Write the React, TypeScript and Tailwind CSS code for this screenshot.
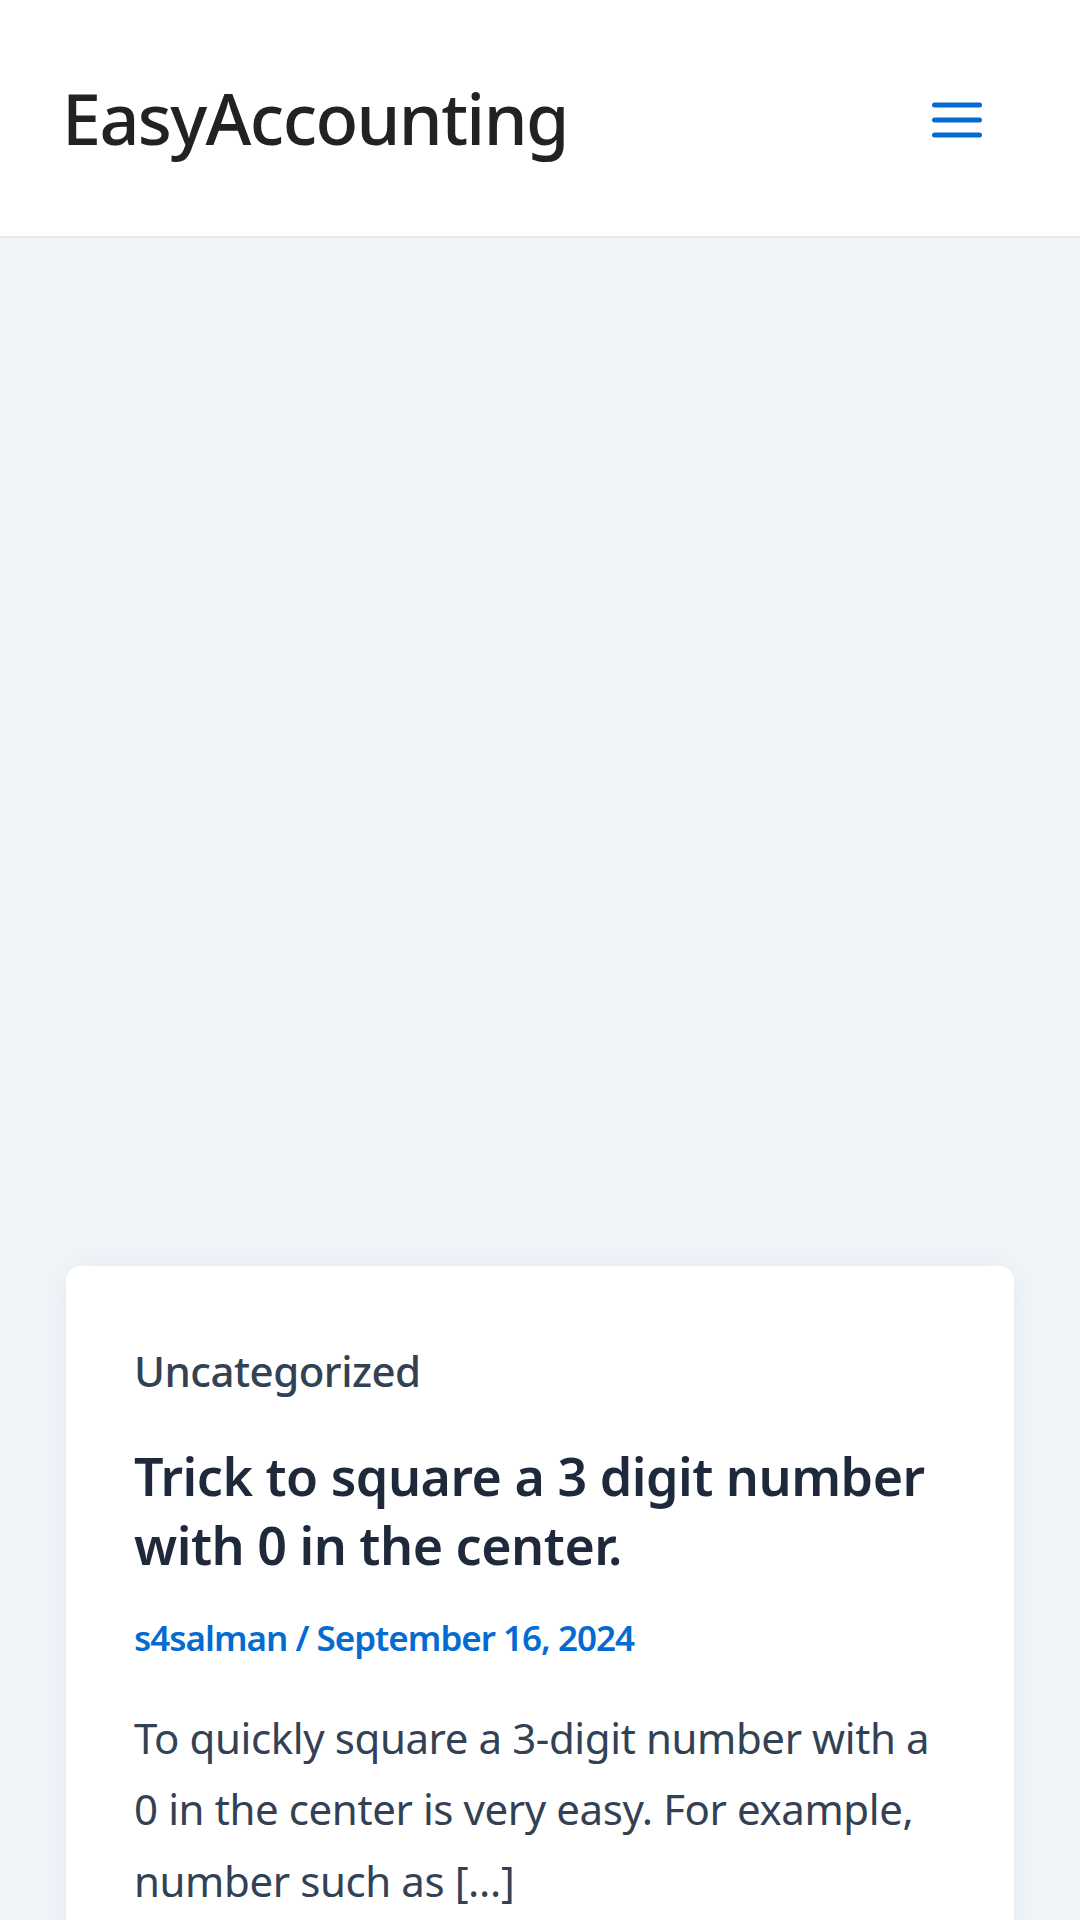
import React from 'react';

const font = { fontFamily: '"Noto Sans", "Open Sans", sans-serif' };

function MenuIcon() {
  return (
    <svg width="50" height="40" viewBox="0 0 50 40" fill="none" stroke="#046bd2" strokeWidth="5" strokeLinecap="round">
      <path d="M2.5 5h45" />
      <path d="M2.5 20h45" />
      <path d="M2.5 35h45" />
    </svg>
  );
}

export default function App() {
  return (
    <div className="min-h-[1920px] w-[1080px] bg-[#f0f5fa] overflow-hidden" style={font}>
      {/* Header */}
      <header className="h-[238px] bg-white border-b-2 border-[#e6e9ed] flex items-center justify-between pl-[62px] pr-[98px]">
        <span className="text-[70px] leading-[90px] font-medium text-[#222] tracking-[-1.6px]">EasyAccounting</span>
        <button className="flex items-center justify-center mt-[4px]" aria-label="Menu">
          <MenuIcon />
        </button>
      </header>

      {/* Ad space */}
      <div className="h-[1028px]" />

      {/* Post card */}
      <main className="px-[66px]">
        <article className="bg-white rounded-[15px] shadow-[0_0_30px_rgba(30,41,59,0.05)] pt-[75px] px-[68px] pb-[80px]">
          <div className="text-[42px] leading-[60px] font-medium text-[#334155] tracking-[-0.5px]">Uncategorized</div>
          <h2 className="mt-[40px] text-[52px] leading-[69px] font-semibold text-[#1e293b] tracking-[-0.5px]">
            Trick to square a 3 digit number with 0 in the center.
          </h2>
          <div className="mt-[33px] text-[35px] leading-[52px] font-semibold text-[#046bd2] tracking-[-1px]">
            s4salman / September 16, 2024
          </div>
          <p className="mt-[38px] text-[42px] leading-[71.4px] text-[#334155] tracking-[-0.4px]">
            To quickly square a 3-digit number with a 0 in the center is very easy. For example, number such as [&hellip;]
          </p>
        </article>
      </main>
    </div>
  );
}
